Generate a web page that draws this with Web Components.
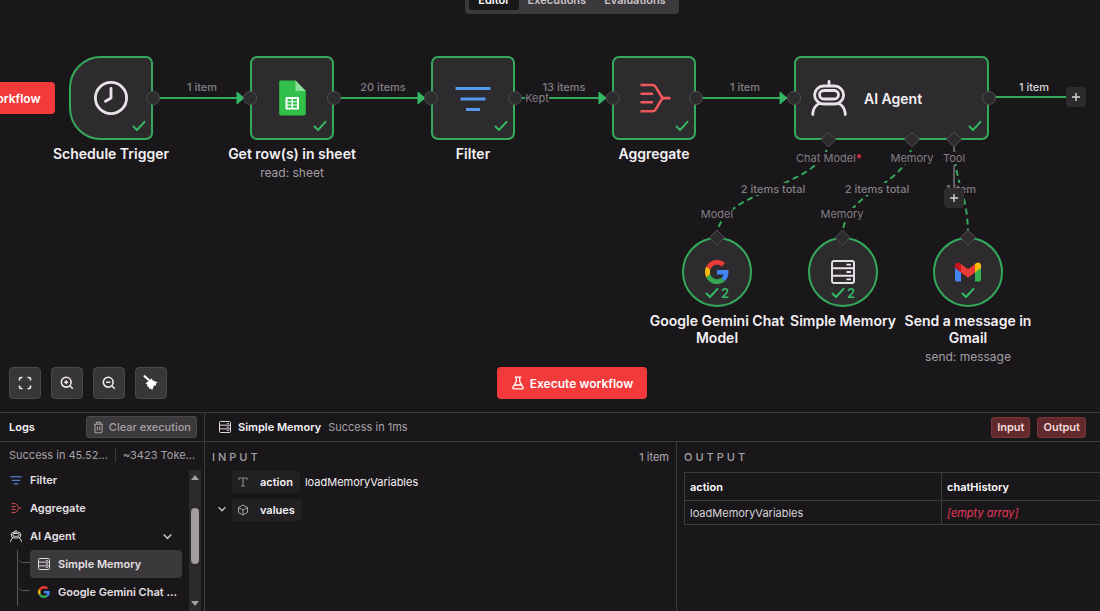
<!DOCTYPE html>
<html lang="en">
<head>
<meta charset="utf-8">
<meta name="viewport" content="width=device-width, initial-scale=1">
<title>Workflow editor</title>
<style>
html, body {
  margin: 0;
  height: 100%;
}

body {
  background: #1a171b;
  color: #f4f1f4;
  font-family: Inter, "Liberation Sans", sans-serif;
  font-size: 11px;
  overflow: hidden;
  --bg: #1a171b;
  --surface: #2e2b2f;
  --raised: #3c393d;
  --line: #3d3a3e;
  --muted: #a5a1a5;
  --green: #35a95b;
  --red: #f23a3a;
}
</style>
</head>
<body>
<workflow-app></workflow-app>

<script>
const icons = {
  clock: ['0 0 36 36', `<g fill="none" stroke="#e8e3e8" stroke-width="2.8" stroke-linecap="round" stroke-linejoin="round"><circle cx="18" cy="18" r="15.6"/><path d="M18 8.500V18l-5.500 3.200"/></g>`],
  sheets: ['0 0 36 36', `<path d="M6.200.6H21.500L31.800 11V33.400a2 2 0 0 1-2 2H7.200a2 2 0 0 1-2-2V1.600a1 1 0 0 1 1-1Z" fill="#31c04a"/><path d="M21.500.6 31.800 11H22.800a1.300 1.300 0 0 1-1.300-1.300Z" fill="#8fdf9b"/><rect x="11.500" y="17" width="13.500" height="12.500" rx="1" fill="#fff"/><path d="M13.500 19h4v2.200h-4zm5.500 0h4v2.200h-4zm-5.500 3.300h4v2.200h-4zm5.500 0h4v2.200h-4zm-5.500 3.300h4v2.200h-4zm5.500 0h4v2.200h-4z" fill="#31c04a"/>`],
  filter: ['0 0 36 36', `<g fill="none" stroke="#549af2" stroke-width="3"><path d="M.5 8.500h35M5.500 19h25M11 29.500h14"/></g>`],
  aggregate: ['0 0 36 36', `<g fill="none" stroke="#f0595c" stroke-width="2.600"><path d="M4.500 5H16.500q2 0 3 1.600L25.500 16.500q1 1.600 2.600 1.600H34.500M4.500 31.200H16.500q2 0 3-1.600L25.500 19.700q1-1.600 2.600-1.600M4.500 13.800H17M4.500 22.200H17"/></g>`],
  robot: ['0 1.500 36 36', `<g fill="none" stroke="#e8e3e8" stroke-width="2.800" stroke-linecap="round"><path d="M18 2.900V7"/><rect x="3.600" y="7.500" width="29" height="18" rx="9"/><rect x="8.500" y="12" width="19" height="8.500" rx="4.200"/><path d="M1.800 36v-1.500Q2.600 27.500 8.500 25M34.200 36v-1.500Q33.400 27.500 27.500 25"/></g>`],
  memory: ['0 0 24 24', `<g fill="none" stroke="#e8e3e8" stroke-width="1.900"><rect x="1" y="1" width="22" height="22" rx="2"/><path d="M1 8.300h22M1 15.700h22"/></g><path d="M15.500 3.800H20v1.800h-4.500zm0 7.300H20v1.800h-4.500zm0 7.300H20v1.800h-4.500z" fill="#e8e3e8"/>`],
  google: ['0 0 48 48', `<path fill="#ea3a35" d="M24 9.500c3.540 0 6.710 1.220 9.210 3.600l6.850-6.850C35.900 2.380 30.470 0 24 0 14.620 0 6.510 5.380 2.560 13.220l7.980 6.190C12.430 13.720 17.740 9.500 24 9.500z"/><path fill="#4285f4" d="M46.980 24.550c0-1.570-.15-3.090-.38-4.550H24v9.020h12.940c-.58 2.960-2.260 5.480-4.780 7.180l7.730 6c4.510-4.180 7.090-10.360 7.090-17.650z"/><path fill="#fbbc05" d="M10.530 28.590c-.48-1.450-.76-2.990-.76-4.590s.27-3.140.76-4.590l-7.980-6.190C.92 16.460 0 20.120 0 24c0 3.880.92 7.540 2.560 10.780l7.970-6.190z"/><path fill="#34a853" d="M24 48c6.480 0 11.930-2.130 15.890-5.810l-7.730-6c-2.150 1.450-4.920 2.300-8.160 2.300-6.260 0-11.570-4.220-13.470-9.910l-7.980 6.190C6.510 42.620 14.620 48 24 48z"/>`],
  gmail: ['0 0 26 26', `<path fill="#4285f4" d="M0 8.500l6 4.500V22.500H1.500A1.500 1.500 0 0 1 0 21z"/><path fill="#34b04f" d="M26 8.500l-6 4.500V22.500h4.500A1.500 1.500 0 0 0 26 21z"/><path fill="#c5161d" d="M0 6.400C0 3.600 3 2.700 4.700 4L6 5v8.500L0 9z"/><path fill="#fbbc04" d="M26 6.400C26 3.600 23 2.700 21.300 4L20 5v8.500L26 9z"/><path fill="#ea3a35" d="M6 5l7 5.200L20 5v8.500l-7 5.200-7-5.200z"/>`],
  check: ['0 0 14 12', `<path d="M1.500 6.500 5 10 12.500 1.800" fill="none" stroke="#35b864" stroke-width="2" stroke-linecap="round" stroke-linejoin="round"/>`],
  plus: ['0 0 10 10', `<path d="M5 1v8M1 5h8" fill="none" stroke="#d8d4d8" stroke-width="1.400"/>`],
  flask: ['0 0 14 14', `<path d="M4.200 1.200h5.600M5.300 1.200v4.300L1.900 11.300a1.100 1.100 0 0 0 1 1.600h8.200a1.100 1.100 0 0 0 1-1.600L8.700 5.500V1.200M3.700 9h6.600" fill="none" stroke="#fff" stroke-width="1.300" stroke-linecap="round" stroke-linejoin="round"/>`],
  fit: ['0 0 14 14', `<path d="M1.500 4.500V3A1.500 1.500 0 0 1 3 1.500h1.500M9.500 1.500H11A1.500 1.500 0 0 1 12.500 3v1.500M12.500 9.500V11a1.500 1.500 0 0 1-1.500 1.500H9.500M4.500 12.500H3A1.500 1.500 0 0 1 1.500 11V9.500" fill="none" stroke="#eeeaee" stroke-width="1.600"/>`],
  zoomIn: ['0 0 14 14', `<path d="M9.800 9.800 12.800 12.800M6.200 4.200v4M4.200 6.200h4" fill="none" stroke="#eeeaee" stroke-width="1.500"/><circle cx="6.200" cy="6.200" r="4.900" fill="none" stroke="#eeeaee" stroke-width="1.600"/>`],
  zoomOut: ['0 0 14 14', `<path d="M9.800 9.800 12.800 12.800M4 6.200h4.400" fill="none" stroke="#eeeaee" stroke-width="1.500"/><circle cx="6.200" cy="6.200" r="4.900" fill="none" stroke="#eeeaee" stroke-width="1.600"/>`],
  broom: ['0 0 16 16', `<path d="M1.600 1.200 5.600 4.800" stroke="#fff" stroke-width="2.200" stroke-linecap="round"/><path d="M4 7.200 8.400 3.600 10 5.600 14.800 7.500 12.800 8.600 13.200 10.200 10.800 10.800 9.300 15 7.500 13.500 6.500 14 5.500 11.500 4 11.500 4.400 9.500 2.600 8.800Z" fill="#fff"/>`],
  trash: ['0 0 12 14', `<path d="M1 3.500h10M4 3.500V1.500h4v2M2.200 3.500v8.200a1 1 0 0 0 1 1h5.600a1 1 0 0 0 1-1V3.500M4.800 6v4M7.200 6v4" fill="none" stroke="#a5a1a5" stroke-width="1.200"/>`],
  chevron: ['0 0 10 10', `<path d="M1.500 3.200 5 6.700 8.500 3.200" fill="none" stroke="#c5c1c5" stroke-width="1.400"/>`],
  text: ['0 0 12 12', `<path d="M2 3.800V2h8v1.800M6 2v8M4.200 10h3.600" fill="none" stroke="#8d898e" stroke-width="1.200"/>`],
  cube: ['0 0 12 12', `<path d="M6 1 10.500 3.500v5L6 11 1.500 8.500v-5ZM1.500 3.500 6 6l4.500-2.500M6 6v5" fill="none" stroke="#a5a1a5" stroke-width="1"/>`]
}

customElements.define('ui-icon',
  /**
   * Draws one icon of the set above.
   */
  class extends HTMLElement {
    constructor () {
      super()
      this.attachShadow({ mode: 'open' })
    }

    connectedCallback () {
      const [box, shape] = icons[this.getAttribute('name')]
      const size = this.getAttribute('size')
      this.shadowRoot.innerHTML = `
        <style>
          :host { display: inline-flex; flex: none; width: ${size}px; height: ${size}px; }
          svg { width: 100%; height: 100%; }
        </style>
        <svg viewBox="${box}" aria-hidden="true">${shape}</svg>`
    }
  })

/**
 * Registers an element whose shadow root is a plain copy of its markup.
 *
 * @param {string} name The tag name.
 * @param {string} markup Styles and markup of the shadow root.
 */
function define (name, markup) {
  const template = document.createElement('template')
  template.innerHTML = markup

  customElements.define(name, class extends HTMLElement {
    constructor () {
      super()
      this.attachShadow({ mode: 'open' })
      this.shadowRoot.appendChild(template.content.cloneNode(true))
    }

    connectedCallback () {
      // icon-only buttons take their name from the host
      if (this.hasAttribute('label')) {
        this.shadowRoot.querySelector('button').setAttribute('aria-label', this.getAttribute('label'))
      }
    }
  })
}

define('run-button', `
<style>
:host { display: inline-flex; }
button {
  display: flex;
  align-items: center;
  gap: 5px;
  height: 32px;
  padding: 0 14px;
  border: 0;
  border-radius: 4px;
  background: var(--red);
  color: #fff;
  font: 600 12px Inter, sans-serif;
  white-space: nowrap;
}
</style>
<button type="button"><ui-icon name="flask" size="14"></ui-icon><slot></slot></button>
`)

define('tool-button', `
<style>
:host { display: inline-flex; }
button {
  display: flex;
  align-items: center;
  justify-content: center;
  width: 32px;
  height: 32px;
  padding: 0;
  border: 1px solid #4b484c;
  border-radius: 4px;
  background: #39363a;
}
</style>
<button type="button"><slot></slot></button>
`)

define('plus-button', `
<style>
:host { position: absolute; transform: translate(-50%, -50%); }
button {
  display: flex;
  align-items: center;
  justify-content: center;
  width: 20px;
  height: 20px;
  padding: 0;
  border: 0;
  border-radius: 4px;
  background: var(--surface);
}
</style>
<button type="button"><ui-icon name="plus" size="10"></ui-icon></button>
`)

define('mode-tabs', `
<style>
:host {
  display: flex;
  padding: 4px;
  border-radius: 4px;
  background: var(--raised);
}
button {
  height: 21px;
  padding: 0 9px;
  border: 0;
  border-radius: 3px;
  background: none;
  color: #c9c5c9;
  font: 600 11px Inter, sans-serif;
}
.active { background: var(--bg); color: #fff; }
</style>
<button type="button" class="active">Editor</button>
<button type="button">Executions</button>
<button type="button">Evaluations</button>
`)

define('flow-node', `
<style>
:host {
  position: absolute;
  display: flex;
  flex-direction: column;
  align-items: center;
  width: 84px;
}
.box {
  position: relative;
  box-sizing: border-box;
  display: flex;
  flex: none;
  align-items: center;
  justify-content: center;
  width: 100%;
  height: 84px;
  border: 2px solid var(--green);
  border-radius: 7px;
  background: var(--surface);
}
.title {
  flex: none;
  width: 140px;
  margin-top: 5px;
  text-align: center;
  font-size: 14px;
  font-weight: 600;
  line-height: 17px;
}
.sub {
  margin-top: 3px;
  color: #a29ea2;
  font-size: 12px;
  line-height: 16px;
  white-space: nowrap;
}
.status {
  position: absolute;
  right: 5px;
  bottom: 5px;
  display: flex;
  align-items: center;
  gap: 2px;
  color: #35b864;
  font-size: 13px;
  font-weight: 600;
  line-height: 12px;
}
:host([kind=trigger]) .box { border-radius: 32px 7px 7px 32px; }
:host([kind=agent]) { width: 195px; }
:host([kind=agent]) .box { justify-content: flex-start; gap: 17px; padding: 0 15px; font-size: 14px; font-weight: 600; }
:host([kind=agent]) .title, :host([kind=agent]) .sub { display: none; }
:host([kind=sub]) { width: 70px; }
:host([kind=sub]) .box { height: 70px; border-radius: 50%; }
:host([kind=sub]) .status { right: 0; left: 0; justify-content: center; }
</style>
<div class="box">
  <slot name="icon"></slot>
  <slot name="inside"></slot>
  <div class="status"><ui-icon name="check" size="14"></ui-icon><slot name="count"></slot></div>
</div>
<div class="title"><slot></slot></div>
<div class="sub"><slot name="sub"></slot></div>
`)

define('edge-label', `
<style>
:host {
  position: absolute;
  transform: translate(-50%, -50%);
  background: var(--bg);
  color: #827e82;
  font-size: 11px;
  font-weight: 500;
  line-height: 12px;
  white-space: nowrap;
}
:host([port]) { font-weight: 400; }
:host([bright]) { color: #d8d4d8; }
::slotted(b) { color: #e8304c; }
</style>
<slot></slot>
`)

define('flow-canvas', `
<style>
:host { position: relative; display: block; overflow: hidden; }
svg.edges { position: absolute; left: 0; top: 0; width: 100%; height: 100%; }
.top, .bottom { position: absolute; left: 44px; right: 0; display: flex; justify-content: center; }
.top { top: -15px; }
.bottom { bottom: 13px; }
.tools { position: absolute; left: 9px; bottom: 13px; display: flex; gap: 10px; }
.start { position: absolute; left: -96px; top: 82px; }
</style>
<svg class="edges">
  <g fill="none" stroke="#35a95b" stroke-width="2">
    <path d="M153 98H240M334 98H421M515 98H602M696 98H783M989 97H1068"/>
    <g stroke-dasharray="6 4">
      <path d="M828.500 140C828.500 188 717 188 717 237"/>
      <path d="M912 140C912 188 842.500 188 842.500 237"/>
      <path d="M954 140C954 188 968 188 968 237"/>
    </g>
  </g>
  <path d="M237 92l7 6-7 6zM418 92l7 6-7 6zM599 92l7 6-7 6zM780 92l7 6-7 6z" fill="#35b864" stroke="#35b864" stroke-linejoin="round"/>
</svg>

<div class="start"><run-button>Execute workflow</run-button></div>

<edge-label style="left: 202px; top: 87px">1 item</edge-label>
<edge-label style="left: 383px; top: 87px">20 items</edge-label>
<edge-label style="left: 564px; top: 87px">13 items</edge-label>
<edge-label style="left: 745px; top: 87px">1 item</edge-label>
<edge-label style="left: 1034px; top: 87px" bright>1 item</edge-label>
<edge-label style="left: 537px; top: 98px" port>Kept</edge-label>
<edge-label style="left: 829px; top: 158px" port>Chat Model<b>*</b></edge-label>
<edge-label style="left: 912px; top: 158px" port>Memory</edge-label>
<edge-label style="left: 954px; top: 158px" port>Tool</edge-label>
<edge-label style="left: 773px; top: 189px">2 items total</edge-label>
<edge-label style="left: 877px; top: 189px">2 items total</edge-label>
<edge-label style="left: 961px; top: 189px">1 item</edge-label>
<edge-label style="left: 717px; top: 214px" port>Model</edge-label>
<edge-label style="left: 842px; top: 214px" port>Memory</edge-label>

<flow-node kind="trigger" style="left: 69px; top: 56px"><ui-icon slot="icon" name="clock" size="36"></ui-icon>Schedule Trigger</flow-node>
<flow-node style="left: 250px; top: 56px"><ui-icon slot="icon" name="sheets" size="36"></ui-icon>Get row(s) in sheet<span slot="sub">read: sheet</span></flow-node>
<flow-node style="left: 431px; top: 56px"><ui-icon slot="icon" name="filter" size="36"></ui-icon>Filter</flow-node>
<flow-node style="left: 612px; top: 56px"><ui-icon slot="icon" name="aggregate" size="36"></ui-icon>Aggregate</flow-node>
<flow-node kind="agent" style="left: 794px; top: 56px"><ui-icon slot="icon" name="robot" size="36"></ui-icon><span slot="inside">AI Agent</span></flow-node>
<flow-node kind="sub" style="left: 682px; top: 237px"><ui-icon slot="icon" name="google" size="24"></ui-icon><span slot="count">2</span>Google Gemini Chat Model</flow-node>
<flow-node kind="sub" style="left: 808px; top: 237px"><ui-icon slot="icon" name="memory" size="24"></ui-icon><span slot="count">2</span>Simple Memory</flow-node>
<flow-node kind="sub" style="left: 933px; top: 237px"><ui-icon slot="icon" name="gmail" size="26"></ui-icon>Send a message in Gmail<span slot="sub">send: message</span></flow-node>

<svg class="edges">
  <g fill="#2e2b2f" stroke="#504d51">
    <circle cx="153" cy="98" r="6.500"/><circle cx="250" cy="98" r="6.500"/>
    <circle cx="334" cy="98" r="6.500"/><circle cx="431" cy="98" r="6.500"/>
    <circle cx="515" cy="98" r="6.500"/><circle cx="613" cy="98" r="6.500"/>
    <circle cx="696" cy="98" r="6.500"/><circle cx="794" cy="98" r="6.500"/>
    <circle cx="989" cy="98" r="6.500"/>
    <path d="M954 146V152M954 165V190" stroke="#605d61" stroke-width="2"/>
    <path d="M828.500 132l7.500 7.500-7.500 7.500-7.500-7.500zM912 132l7.500 7.500-7.500 7.500-7.500-7.500zM954 132l7.500 7.500-7.500 7.500-7.500-7.500zM717 230l7.500 7.500-7.500 7.500-7.500-7.500zM842.500 230l7.500 7.500-7.500 7.500-7.500-7.500zM968 230l7.500 7.500-7.500 7.500-7.500-7.500z"/>
  </g>
</svg>
<plus-button label="Add node" style="left: 1076px; top: 97px"></plus-button>
<plus-button label="Add tool" style="left: 954px; top: 198px"></plus-button>

<div class="top"><mode-tabs></mode-tabs></div>
<div class="tools">
  <tool-button label="Zoom to fit"><ui-icon name="fit" size="14"></ui-icon></tool-button>
  <tool-button label="Zoom in"><ui-icon name="zoomIn" size="14"></ui-icon></tool-button>
  <tool-button label="Zoom out"><ui-icon name="zoomOut" size="14"></ui-icon></tool-button>
  <tool-button label="Tidy up"><ui-icon name="broom" size="16"></ui-icon></tool-button>
</div>
<div class="bottom"><run-button>Execute workflow</run-button></div>
`)

define('log-entry', `
<style>
:host { display: flex; }
button {
  display: flex;
  flex: 1;
  align-items: center;
  gap: 8px;
  min-width: 0;
  height: 28px;
  padding: 0 4px 0 8px;
  border: 0;
  border-radius: 4px;
  background: none;
  color: #e4e0e4;
  font: 600 11px Inter, sans-serif;
  text-align: left;
}
.text { flex: 1; overflow: hidden; text-overflow: ellipsis; white-space: nowrap; }
:host([selected]) button { background: var(--raised); }
</style>
<button type="button"><slot name="icon"></slot><span class="text"><slot></slot></span><slot name="end"></slot></button>
`)

define('log-list', `
<style>
:host {
  display: flex;
  flex-direction: column;
  border-right: 1px solid var(--line);
  overflow: hidden;
}
header {
  display: flex;
  flex: none;
  align-items: center;
  justify-content: space-between;
  height: 28px;
  padding: 0 7px 0 9px;
  border-bottom: 1px solid var(--line);
  font-weight: 600;
}
.clear {
  display: flex;
  align-items: center;
  gap: 4px;
  height: 22px;
  padding: 0 5px;
  border: 1px solid #4b484c;
  border-radius: 3px;
  background: var(--raised);
  color: var(--muted);
  font: 500 11px Inter, sans-serif;
}
.stats {
  display: flex;
  flex: none;
  align-items: center;
  height: 24px;
  padding-left: 9px;
  padding-top: 2px;
  box-sizing: border-box;
  color: var(--muted);
}
.stats span { overflow: hidden; text-overflow: ellipsis; white-space: nowrap; }
.stats span:first-child { padding-right: 7px; border-right: 1px solid var(--line); }
.stats span:last-child { padding-left: 7px; }
.scroll { display: flex; flex: 1; min-height: 0; }
.rows { flex: 1; min-width: 0; overflow: hidden; }
.rows > log-entry { padding-left: 2px; }
.children { margin: 0 7px 0 17px; border-left: 1px solid #5b585c; }
.child { display: flex; }
.child::before {
  content: "";
  width: 12px;
  height: 12px;
  border-bottom: 1px solid #5b585c;
  border-bottom-left-radius: 5px;
}
.child log-entry { flex: 1; min-width: 0; }
.bar {
  display: flex;
  flex: none;
  flex-direction: column;
  align-items: center;
  width: 12px;
  margin: 4px 3px 0 0;
  padding: 5px 0;
  box-sizing: border-box;
  background: #2c292d;
}
.bar i { border: 4px solid transparent; }
.bar .up { border-bottom: 5px solid var(--muted); border-top: 0; }
.bar .down { border-top: 5px solid var(--muted); border-bottom: 0; }
.thumb { width: 8px; height: 56px; margin: 28px 0 auto; border-radius: 4px; background: #a19da1; }
</style>
<header>Logs <button type="button" class="clear"><ui-icon name="trash" size="13"></ui-icon>Clear execution</button></header>
<div class="stats"><span>Success in 45.52...</span><span>~3423 Toke...</span></div>
<div class="scroll">
  <div class="rows">
    <log-entry><ui-icon slot="icon" name="filter" size="12"></ui-icon>Filter</log-entry>
    <log-entry><ui-icon slot="icon" name="aggregate" size="12"></ui-icon>Aggregate</log-entry>
    <log-entry><ui-icon slot="icon" name="robot" size="12"></ui-icon>AI Agent<ui-icon slot="end" name="chevron" size="11" style="margin-right: 12px"></ui-icon></log-entry>
    <div class="children">
      <div class="child"><log-entry selected><ui-icon slot="icon" name="memory" size="12"></ui-icon>Simple Memory</log-entry></div>
      <div class="child"><log-entry><ui-icon slot="icon" name="google" size="12"></ui-icon>Google Gemini Chat ...</log-entry></div>
    </div>
  </div>
  <div class="bar"><i class="up"></i><div class="thumb"></div><i class="down"></i></div>
</div>
`)

define('value-row', `
<style>
:host { display: grid; grid-template-columns: 20px auto 1fr; align-items: center; height: 22px; }
.chip {
  display: flex;
  align-items: center;
  gap: 11px;
  height: 22px;
  padding: 0 7px 0 5px;
  border-radius: 3px;
  background: #232024;
  font-weight: 600;
}
.value { padding-left: 5px; }
</style>
<span><slot name="toggle"></slot></span>
<div class="chip"><slot name="icon"></slot><slot></slot></div>
<span class="value"><slot name="value"></slot></span>
`)

define('log-detail', `
<style>
:host { display: flex; flex-direction: column; overflow: hidden; }
header {
  display: flex;
  flex: none;
  align-items: center;
  gap: 7px;
  height: 28px;
  padding: 0 14px;
  border-bottom: 1px solid var(--line);
}
header strong { font-weight: 600; }
header span { flex: 1; color: var(--muted); }
header button {
  height: 21px;
  padding: 0 5px;
  border: 1px solid #7a3539;
  border-radius: 3px;
  background: #632a2e;
  color: #f4dcdc;
  font: 600 11px Inter, sans-serif;
}
.panes { display: grid; grid-template-columns: 471px 1fr; flex: 1; min-height: 0; }
section { padding: 8px 7px; min-width: 0; overflow: hidden; }
section + section { border-left: 1px solid var(--line); padding-right: 0; }
.head { display: flex; justify-content: space-between; height: 15px; line-height: 15px; color: #b1adb1; }
h2 { margin: 0; color: var(--muted); font-size: 11px; font-weight: 500; letter-spacing: 3px; }
.values { display: grid; gap: 6px; margin-top: 6px; }
table { width: calc(100% + 8px); margin-top: 7px; border-collapse: collapse; table-layout: fixed; }
th, td { padding: 0 5px; border: 1px solid var(--line); text-align: left; }
th { height: 27px; color: #fff; font-weight: 600; }
th:first-child { width: 246px; }
td { height: 23px; color: #d8d4d8; }
em { color: #e8385a; }
</style>
<header>
  <ui-icon name="memory" size="12"></ui-icon>
  <strong>Simple Memory</strong>
  <span>Success in 1ms</span>
  <button type="button">Input</button>
  <button type="button">Output</button>
</header>
<div class="panes">
  <section>
    <div class="head"><h2>INPUT</h2>1 item</div>
    <div class="values">
      <value-row><ui-icon slot="icon" name="text" size="12"></ui-icon>action<span slot="value">loadMemoryVariables</span></value-row>
      <value-row><ui-icon slot="toggle" name="chevron" size="10" style="margin-left: 5px"></ui-icon><ui-icon slot="icon" name="cube" size="12"></ui-icon>values</value-row>
    </div>
  </section>
  <section>
    <div class="head"><h2>OUTPUT</h2></div>
    <table>
      <tr><th>action</th><th>chatHistory</th></tr>
      <tr><td>loadMemoryVariables</td><td><em>[empty array]</em></td></tr>
    </table>
  </section>
</div>
`)

define('workflow-app', `
<style>
:host { display: flex; flex-direction: column; height: 100vh; }
flow-canvas { flex: 1; min-height: 0; }
.logs {
  display: grid;
  grid-template-columns: 205px 1fr;
  flex: none;
  height: 198px;
  border-top: 1px solid var(--line);
}
log-list, log-detail { min-width: 0; min-height: 0; }
</style>
<flow-canvas></flow-canvas>
<div class="logs"><log-list></log-list><log-detail></log-detail></div>
`)
</script>
</body>
</html>
